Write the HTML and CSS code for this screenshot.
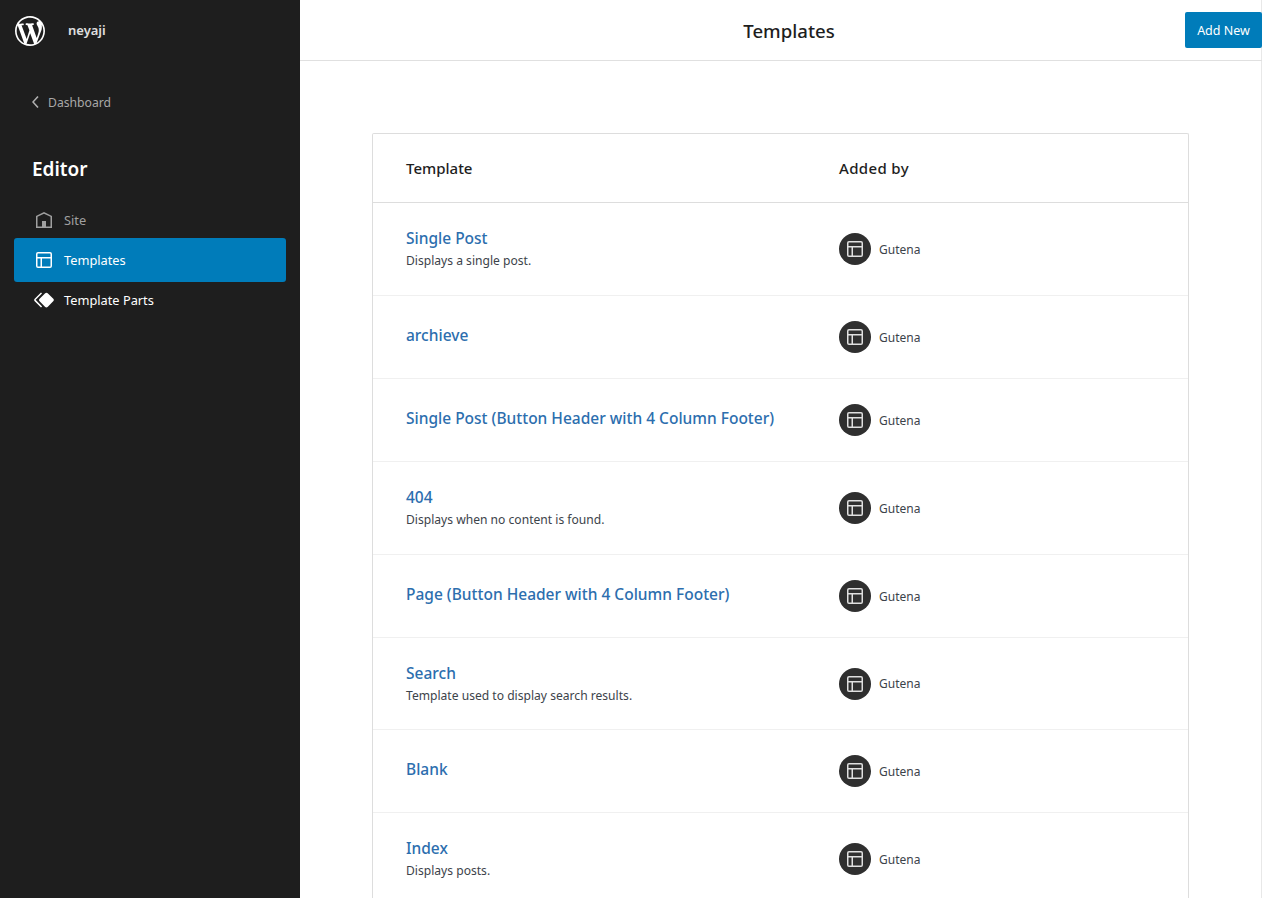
FILE: index.html
```html
<!DOCTYPE html>
<html lang="en">
<head>
<meta charset="utf-8">
<title>Templates</title>
<link rel="stylesheet" href="styles.css">
</head>
<body>
<div class="app">
  <aside class="sidebar">
    <div class="brand">
      <svg class="wp-logo" viewBox="0 0 20 20"><path d="M20 10c0-5.51-4.49-10-10-10C4.48 0 0 4.49 0 10c0 5.52 4.48 10 10 10 5.51 0 10-4.48 10-10zM7.78 15.37L4.37 6.22c.55-.02 1.17-.08 1.17-.08.5-.06.44-1.13-.06-1.11 0 0-1.45.11-2.37.11-.18 0-.37 0-.58-.01C4.12 2.69 6.87 1.11 10 1.11c2.33 0 4.45.87 6.05 2.34-.68-.11-1.65.39-1.65 1.58 0 .74.45 1.36.9 2.1.35.61.55 1.36.55 2.46 0 1.49-1.4 5-1.4 5l-3.03-8.37c.54-.02.82-.17.82-.17.5-.05.44-1.25-.06-1.22 0 0-1.44.12-2.38.12-.87 0-2.33-.12-2.33-.12-.5-.03-.56 1.2-.06 1.22l.92.08 1.26 3.41zM17.41 10c.24-.64.74-1.87.43-4.25.7 1.29 1.05 2.71 1.05 4.25 0 3.29-1.73 6.24-4.4 7.78.97-2.59 1.94-5.2 2.92-7.78zM6.1 18.09C3.12 16.65 1.11 13.53 1.11 10c0-1.3.23-2.48.72-3.59C3.25 10.3 4.67 14.2 6.1 18.09zm4.03-6.63l2.58 6.98c-.86.29-1.76.45-2.71.45-.79 0-1.57-.11-2.29-.33.81-2.38 1.62-4.74 2.42-7.1z"/></svg>
      <span class="site-name">neyaji</span>
    </div>
    <a class="back" href="#">
      <svg class="chev" viewBox="0 0 24 24"><path d="M14.6 7l-1.2-1L8 12l5.4 6 1.2-1-4.6-5z"/></svg>
      <span>Dashboard</span>
    </a>
    <h2 class="section-title">Editor</h2>
    <nav class="nav">
      <a class="nav-item dim" href="#">
        <svg class="nav-icon" viewBox="0 0 24 24"><path d="M12 4L4 7.9V20h16V7.9L12 4zm6.5 14.5H14V13h-4v5.5H5.5V8.8L12 5.7l6.5 3.1v9.7z"/></svg>
        <span>Site</span>
      </a>
      <a class="nav-item active" href="#">
        <svg class="nav-icon" viewBox="0 0 24 24"><path d="M18 5.5H6a.5.5 0 00-.5.5v3h13V6a.5.5 0 00-.5-.5zm.5 5H10v8h8a.5.5 0 00.5-.5v-7.5zm-10 0h-3V18a.5.5 0 00.5.5h2.5v-8zM6 4h12a2 2 0 012 2v12a2 2 0 01-2 2H6a2 2 0 01-2-2V6a2 2 0 012-2z"/></svg>
        <span>Templates</span>
      </a>
      <a class="nav-item" href="#">
        <svg class="nav-icon" viewBox="0 0 24 24"><path d="M21.3 10.8l-5.6-5.6c-.7-.7-1.8-.7-2.5 0l-5.6 5.6c-.7.7-.7 1.8 0 2.5l5.6 5.6c.3.3.8.5 1.2.5s.9-.2 1.2-.5l5.6-5.6c.8-.7.8-1.9.1-2.5zm-17.6 1L10 5.5l-1-1-6.3 6.3c-.7.7-.7 1.8 0 2.5L9 19.5l1.1-1.1-6.3-6.3c-.2 0-.2-.2-.1-.3z"/></svg>
        <span>Template Parts</span>
      </a>
    </nav>
  </aside>
  <main class="main">
    <header class="topbar">
      <h1 class="page-title">Templates</h1>
      <a class="add-new" href="#">Add New</a>
    </header>
    <div class="content">
      <div class="table">
        <div class="row head">
          <div>Template</div>
          <div class="added">Added by</div>
        </div>
        <div class="row h92">
          <div><a class="name" href="#">Single Post</a><p class="desc">Displays a single post.</p></div>
          <div class="author"><span class="avatar"><svg viewBox="0 0 24 24"><path d="M18 5.5H6a.5.5 0 00-.5.5v3h13V6a.5.5 0 00-.5-.5zm.5 5H10v8h8a.5.5 0 00.5-.5v-7.5zm-10 0h-3V18a.5.5 0 00.5.5h2.5v-8zM6 4h12a2 2 0 012 2v12a2 2 0 01-2 2H6a2 2 0 01-2-2V6a2 2 0 012-2z"/></svg></span><span>Gutena</span></div>
        </div>
        <div class="row h83">
          <div><a class="name" href="#">archieve</a></div>
          <div class="author"><span class="avatar"><svg viewBox="0 0 24 24"><path d="M18 5.5H6a.5.5 0 00-.5.5v3h13V6a.5.5 0 00-.5-.5zm.5 5H10v8h8a.5.5 0 00.5-.5v-7.5zm-10 0h-3V18a.5.5 0 00.5.5h2.5v-8zM6 4h12a2 2 0 012 2v12a2 2 0 01-2 2H6a2 2 0 01-2-2V6a2 2 0 012-2z"/></svg></span><span>Gutena</span></div>
        </div>
        <div class="row h83">
          <div><a class="name" href="#">Single Post (Button Header with 4 Column Footer)</a></div>
          <div class="author"><span class="avatar"><svg viewBox="0 0 24 24"><path d="M18 5.5H6a.5.5 0 00-.5.5v3h13V6a.5.5 0 00-.5-.5zm.5 5H10v8h8a.5.5 0 00.5-.5v-7.5zm-10 0h-3V18a.5.5 0 00.5.5h2.5v-8zM6 4h12a2 2 0 012 2v12a2 2 0 01-2 2H6a2 2 0 01-2-2V6a2 2 0 012-2z"/></svg></span><span>Gutena</span></div>
        </div>
        <div class="row h93">
          <div><a class="name" href="#">404</a><p class="desc">Displays when no content is found.</p></div>
          <div class="author"><span class="avatar"><svg viewBox="0 0 24 24"><path d="M18 5.5H6a.5.5 0 00-.5.5v3h13V6a.5.5 0 00-.5-.5zm.5 5H10v8h8a.5.5 0 00.5-.5v-7.5zm-10 0h-3V18a.5.5 0 00.5.5h2.5v-8zM6 4h12a2 2 0 012 2v12a2 2 0 01-2 2H6a2 2 0 01-2-2V6a2 2 0 012-2z"/></svg></span><span>Gutena</span></div>
        </div>
        <div class="row h83">
          <div><a class="name" href="#">Page (Button Header with 4 Column Footer)</a></div>
          <div class="author"><span class="avatar"><svg viewBox="0 0 24 24"><path d="M18 5.5H6a.5.5 0 00-.5.5v3h13V6a.5.5 0 00-.5-.5zm.5 5H10v8h8a.5.5 0 00.5-.5v-7.5zm-10 0h-3V18a.5.5 0 00.5.5h2.5v-8zM6 4h12a2 2 0 012 2v12a2 2 0 01-2 2H6a2 2 0 01-2-2V6a2 2 0 012-2z"/></svg></span><span>Gutena</span></div>
        </div>
        <div class="row h92">
          <div><a class="name" href="#">Search</a><p class="desc">Template used to display search results.</p></div>
          <div class="author"><span class="avatar"><svg viewBox="0 0 24 24"><path d="M18 5.5H6a.5.5 0 00-.5.5v3h13V6a.5.5 0 00-.5-.5zm.5 5H10v8h8a.5.5 0 00.5-.5v-7.5zm-10 0h-3V18a.5.5 0 00.5.5h2.5v-8zM6 4h12a2 2 0 012 2v12a2 2 0 01-2 2H6a2 2 0 01-2-2V6a2 2 0 012-2z"/></svg></span><span>Gutena</span></div>
        </div>
        <div class="row h83">
          <div><a class="name" href="#">Blank</a></div>
          <div class="author"><span class="avatar"><svg viewBox="0 0 24 24"><path d="M18 5.5H6a.5.5 0 00-.5.5v3h13V6a.5.5 0 00-.5-.5zm.5 5H10v8h8a.5.5 0 00.5-.5v-7.5zm-10 0h-3V18a.5.5 0 00.5.5h2.5v-8zM6 4h12a2 2 0 012 2v12a2 2 0 01-2 2H6a2 2 0 01-2-2V6a2 2 0 012-2z"/></svg></span><span>Gutena</span></div>
        </div>
        <div class="row h93">
          <div><a class="name" href="#">Index</a><p class="desc">Displays posts.</p></div>
          <div class="author"><span class="avatar"><svg viewBox="0 0 24 24"><path d="M18 5.5H6a.5.5 0 00-.5.5v3h13V6a.5.5 0 00-.5-.5zm.5 5H10v8h8a.5.5 0 00.5-.5v-7.5zm-10 0h-3V18a.5.5 0 00.5.5h2.5v-8zM6 4h12a2 2 0 012 2v12a2 2 0 01-2 2H6a2 2 0 01-2-2V6a2 2 0 012-2z"/></svg></span><span>Gutena</span></div>
        </div>
      </div>
    </div>
  </main>
</div>
</body>
</html>
```
FILE: styles.css
```css
* { box-sizing: border-box; }
html, body { margin: 0; height: 100%; overflow: hidden; }
body { font-family: "Noto Sans", "Open Sans", sans-serif; font-size: 13px; color: #1e1e1e; background: #fff; }
a { text-decoration: none; color: inherit; }
.app { display: flex; height: 898px; overflow: hidden; }

.sidebar { width: 300px; flex: none; background: #1e1e1e; color: #fff; padding: 0 14px; }
.brand { height: 60px; display: flex; align-items: center; gap: 23px; }
.wp-logo { width: 30px; height: 30px; fill: #fff; margin: 2px 0 0 1px; }
.site-name { font-size: 13px; font-weight: 600; color: #e0e0e0; }
.back { display: flex; align-items: center; height: 32px; margin: 26px 0 0 10px; color: #a8a8a8; font-size: 12.2px; }
.chev { width: 24px; height: 24px; fill: #b0b0b0; flex: none; }
.section-title { margin: 35px 0 0 18px; height: 32px; line-height: 32px; font-size: 19px; font-weight: 600; color: #fff; }
.nav { margin-top: 13px; }
.nav-item { display: flex; align-items: center; gap: 8px; height: 44px; margin-top: -4px; padding-left: 18px; border-radius: 3px; font-size: 12.8px; color: #fff; }
.nav-item:first-child { margin-top: 0; }
.nav-item.dim { color: #a0a0a0; }
.nav-item.active { background: #007cba; }
.nav-icon { width: 24px; height: 24px; fill: currentColor; flex: none; }

.main { flex: 1; min-width: 0; border-right: 1px solid #e8e8e8; }
.topbar { height: 61px; margin-right: -1px; padding: 1px 0 0 16px; border-bottom: 1px solid #e0e0e0; display: flex; align-items: flex-start; justify-content: center; position: relative; }
.page-title { margin: 0; font-size: 18.6px; font-weight: 500; line-height: 60px; color: #1e1e1e; }
.add-new { position: absolute; right: 0; top: 12px; width: 77px; height: 36px; background: #007cba; color: #fff; border-radius: 2px; font-size: 12.5px; display: flex; align-items: center; justify-content: center; }

.content { padding: 72px 72px 0; }
.table { border: 1px solid #ddd; border-bottom: 0; border-radius: 2px 2px 0 0; }
.row { display: grid; grid-template-columns: 433px 1fr; align-items: center; padding-left: 33px; border-top: 1px solid #f0f0f0; }
.row.head { height: 69px; border-top: 0; border-bottom: 1px solid #ddd; font-size: 15px; font-weight: 500; }
.row.head + .row { border-top: 0; }
.added { letter-spacing: 0.35px; }
.h93 { height: 93px; }
.h92 { height: 92px; }
.h83 { height: 83px; }
.name { font-size: 15.5px; font-weight: 500; color: #2c6eae; line-height: 20px; display: block; }
.name:only-child { margin-bottom: 4px; }
.desc { margin: 4px 0 0; font-size: 12.1px; line-height: 18px; color: #3c434a; }
.author { display: flex; align-items: center; gap: 8px; font-size: 12px; color: #3c434a; }
.avatar { width: 32px; height: 32px; border-radius: 50%; background: #2f2f2f; display: flex; align-items: center; justify-content: center; flex: none; }
.avatar svg { width: 24px; height: 24px; fill: #e0e0e0; }
```
